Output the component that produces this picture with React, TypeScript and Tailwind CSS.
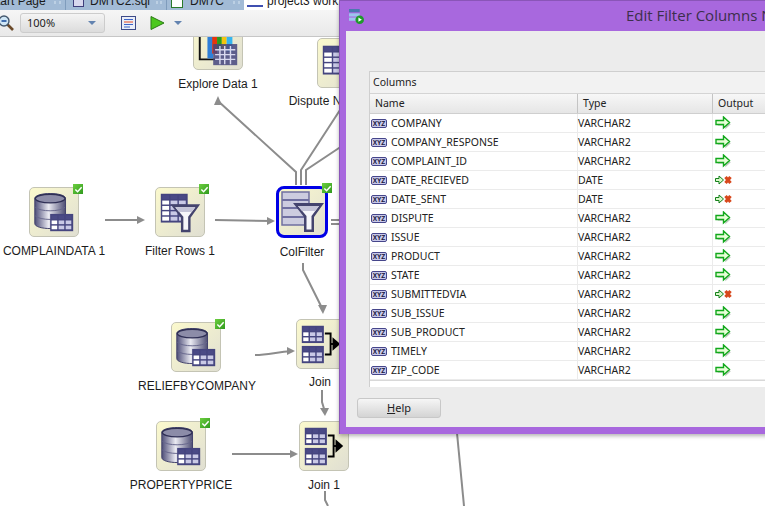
import React from 'react';

const arial = 'font-["Liberation_Sans",Arial,sans-serif]';
const tahoma = 'font-["Noto_Sans",Tahoma,sans-serif]';

const GridTable = ({ x, y, w, h, cols = 3, rows = 4 }: { x: number; y: number; w: number; h: number; cols?: number; rows?: number }) => {
  const cw = (w - 2) / cols;
  const ch = (h - 2) / rows;
  const cells = [];
  for (let r = 0; r < rows; r++) {
    for (let c = 0; c < cols; c++) {
      cells.push(
        <rect
          key={`${r}-${c}`}
          x={x + 1.5 + c * cw}
          y={y + 1.5 + r * ch}
          width={cw - 1.5}
          height={ch - 1.5}
          fill={r === 0 ? '#4a4a86' : c === 0 ? '#ffffff' : '#c9c9e6'}
        />
      );
    }
  }
  return (
    <g>
      <rect x={x} y={y} width={w} height={h} fill="#45457f" />
      {cells}
    </g>
  );
};

const Funnel = ({ dx = 0, dy = 0 }: { dx?: number; dy?: number }) => (
  <g transform={`translate(${dx} ${dy})`}>
    <path d="M15 17H46L36 31V46H26V31Z" fill="#44446e" />
    <path d="M20 20H41L33.5 30V43.5H28.5V30Z" fill="#f6f6fa" />
    <path d="M20 20H41L37 25H24Z" fill="#c4c4d8" />
  </g>
);

const DbIcon = () => (
  <svg viewBox="0 0 50 50" className="w-full h-full">
    <defs>
      <linearGradient id="dbg" x1="0" x2="1" y1="0" y2="0">
        <stop offset="0" stopColor="#4e4e78" />
        <stop offset="0.45" stopColor="#eaeaf2" />
        <stop offset="1" stopColor="#4e4e74" />
      </linearGradient>
    </defs>
    <path d="M5 11C5 4 37 4 37 11V37C37 44 5 44 5 37Z" fill="url(#dbg)" stroke="#3f3f6a" strokeWidth="1" />
    <ellipse cx="21" cy="11" rx="15.5" ry="4.5" fill="#8c8ca8" stroke="#2f2f55" strokeWidth="1.5" />
    <path d="M5.5 20C10 25 32 25 36.5 20M5.5 29C10 34 32 34 36.5 29" fill="none" stroke="#66668c" strokeWidth="1" />
    <GridTable x={21} y={27} w={24} h={18} rows={3} />
  </svg>
);

const FilterRowsIcon = () => (
  <svg viewBox="0 0 50 50" className="w-full h-full">
    <GridTable x={5} y={6} w={28} h={30} rows={5} />
    <Funnel />
  </svg>
);

const ColFilterIcon = () => (
  <svg viewBox="0 0 50 50" className="w-full h-full">
    <rect x="5" y="5" width="27" height="33" fill="#ccccdf" stroke="#6f6fa0" strokeWidth="1.5" />
    <path d="M5 13H32M5 21H32M5 30H32" stroke="#6f6fa0" strokeWidth="2" />
    <Funnel dx={1} dy={-1} />
  </svg>
);

const JoinIcon = () => (
  <svg viewBox="0 0 50 50" className="w-full h-full">
    <GridTable x={5} y={6} w={23} h={18} rows={3} />
    <GridTable x={5} y={27} w={23} h={18} rows={3} />
    <path d="M29 14H35V36H29" fill="none" stroke="#000000" strokeWidth="2" />
    <path d="M35 25H38" stroke="#000000" strokeWidth="2" />
    <path d="M37 18L45 25L37 32Z" fill="#000000" />
  </svg>
);

const ExploreIcon = () => (
  <svg viewBox="0 0 50 50" className="w-full h-full">
    <path d="M6 0V40H22" fill="none" stroke="#111111" strokeWidth="2" />
    <rect x="14" y="9" width="6" height="30" fill="#2f7fd8" />
    <rect x="19" y="0" width="5" height="34" fill="#e8340c" />
    <rect x="24" y="0" width="5" height="30" fill="#2c9a1c" />
    <rect x="29" y="0" width="5" height="30" fill="#f3c40f" />
    <rect x="34" y="6" width="6" height="26" fill="#35b4ee" />
    <rect x="20" y="24" width="25" height="22" fill="#45457f" fillOpacity="0.85" />
    <path d="M22 30H43M22 35H43M22 40H43M27 26V45M32 26V45M38 26V45" stroke="#d8d8ee" strokeWidth="1.5" />
  </svg>
);

const DisputeIcon = () => (
  <svg viewBox="0 0 50 50" className="w-full h-full">
    <GridTable x={5} y={7} w={30} h={30} rows={5} />
  </svg>
);

const Check = () => (
  <div className="absolute -right-[5px] -top-[4px] w-[10px] h-[10px] bg-gradient-to-br from-[#6ccf3f] to-[#2f9a1e] flex items-center justify-center">
    <svg viewBox="0 0 10 10" className="w-[9px] h-[9px]">
      <path d="M1.5 5L4 7.5L8.5 2.5" fill="none" stroke="#ffffff" strokeWidth="1.6" />
    </svg>
  </div>
);

// Node on the workflow canvas; className places it, label is centred under the box
const FlowNode = ({ className, label, icon, done, selected, labelClass = 'mt-[7px]' }: {
  className: string;
  label: string;
  icon: React.ReactNode;
  done?: boolean;
  selected?: boolean;
  labelClass?: string;
}) => (
  <div className={`absolute w-[160px] flex flex-col items-center ${className}`}>
    <div
      className={`relative shrink-0 w-[50px] h-[50px] rounded-[5px] bg-gradient-to-br from-[#fbf9cd] to-[#e0dfd2] ${
        selected ? 'outline-[3px] outline outline-[#0000e6] -outline-offset-2 rounded-[7px]' : 'border border-[#c4c4b4]'
      }`}
    >
      {icon}
      {done && <Check />}
    </div>
    <div className={`${labelClass} text-[12px] leading-[14px] text-[#1c1c1c] whitespace-nowrap ${arial}`}>{label}</div>
  </div>
);

const Connectors = () => (
  <svg viewBox="0 37 765 469" className="absolute inset-0 w-[765px] h-[469px]" fill="none" stroke="#8c8c8c" strokeWidth="2">
    <path d="M105 220H142M215 220L272 221" />
    <path d="M296 185V172L218 101" />
    <path d="M301 185V170L340 110" />
    <path d="M306 185V170L342 146" />
    <path d="M331 220H340M331 224H340" />
    <path d="M303 263V270L322 308" />
    <path d="M255 355C270 355 275 352 293 351" />
    <path d="M322 390V402L325 412" />
    <path d="M232 454H295" />
    <path d="M325 491V500L328 506" />
    <path d="M457 433L464 506" />
    <g fill="#8c8c8c" stroke="none">
      <path d="M145 220L137 216V224Z" />
      <path d="M275 221L267 217V225Z" />
      <path d="M218 96L214 105H222Z" />
      <path d="M323 314L318 305H327Z" />
      <path d="M295 351L287 347V355Z" />
      <path d="M325 416L320 408H329Z" />
      <path d="M298 454L290 450V458Z" />
    </g>
  </svg>
);

const columns: { name: string; type: string; out?: boolean }[] = [
  { name: 'COMPANY', type: 'VARCHAR2', out: true },
  { name: 'COMPANY_RESPONSE', type: 'VARCHAR2', out: true },
  { name: 'COMPLAINT_ID', type: 'VARCHAR2', out: true },
  { name: 'DATE_RECIEVED', type: 'DATE' },
  { name: 'DATE_SENT', type: 'DATE' },
  { name: 'DISPUTE', type: 'VARCHAR2', out: true },
  { name: 'ISSUE', type: 'VARCHAR2', out: true },
  { name: 'PRODUCT', type: 'VARCHAR2', out: true },
  { name: 'STATE', type: 'VARCHAR2', out: true },
  { name: 'SUBMITTEDVIA', type: 'VARCHAR2' },
  { name: 'SUB_ISSUE', type: 'VARCHAR2', out: true },
  { name: 'SUB_PRODUCT', type: 'VARCHAR2', out: true },
  { name: 'TIMELY', type: 'VARCHAR2', out: true },
  { name: 'ZIP_CODE', type: 'VARCHAR2', out: true },
];

const XyzIcon = () => (
  <svg viewBox="0 0 16 9" className="w-[16px] h-[9px] shrink-0">
    <rect x="0.5" y="0.5" width="15" height="8" rx="1.5" fill="#c9c9ea" stroke="#45458a" />
    <text x="8" y="6.8" textAnchor="middle" fontSize="6.5" fontWeight="700" fontFamily="Liberation Sans" fill="#14143a">XYZ</text>
  </svg>
);

const OutArrow = () => (
  <svg viewBox="0 0 16 14" className="w-[16px] h-[14px]">
    <path d="M2 6H9.5V2.5L15 7.5L9.5 12.5V9H2Z" fill="#5a7a5a" opacity="0.4" transform="translate(0.8 0.8)" />
    <path d="M1 4.5H8.5V1L14.5 6.5L8.5 12V8.5H1Z" fill="#e8ffd8" stroke="#12a81c" strokeWidth="1.4" />
  </svg>
);

const NoOutArrow = () => (
  <svg viewBox="0 0 17 10" className="w-[17px] h-[10px]">
    <path d="M0.5 3.5H4V1L8.5 5L4 9V6.5H0.5Z" fill="#d8f8c8" stroke="#14801a" />
    <path d="M10.5 2L15.5 8M15.5 2L10.5 8" stroke="#d8481c" strokeWidth="3.2" />
  </svg>
);

const Triangle = ({ className }: { className: string }) => (
  <svg viewBox="0 0 8 4" className={`w-[8px] h-[4px] ${className}`}>
    <path d="M0 0H8L4 4Z" fill="#6383b0" />
  </svg>
);

const Tab = ({ className, icon, text, dots = true }: { className: string; icon?: React.ReactNode; text: string; dots?: boolean }) => (
  <div className={`relative h-[10px] flex items-start overflow-hidden ${className}`}>
    {icon}
    <span className={`-mt-[6px] text-[12px] leading-[15px] text-[#1a1a1a] whitespace-nowrap ${arial}`}>{text}</span>
    {dots && <span className="ml-auto mr-[4px] mt-[1px] w-[7px] h-[3px] border-x-2 border-[#bcd0e4]" />}
  </div>
);

const Dialog = () => (
  <div className="absolute left-[339px] top-0 w-[445px] h-[434px] bg-[#a868de] border-t border-l border-[#8a55b8] shadow-[0_2px_4px_rgba(0,0,0,0.3)] flex flex-col">
    <div className="relative h-[30px] shrink-0 flex items-center">
      <svg viewBox="0 0 14 14" className="ml-[9px] w-[15px] h-[15px]">
        <rect x="0" y="0" width="10" height="3" fill="#4a78b0" />
        <rect x="0" y="4" width="10" height="3" fill="#9cc4ee" />
        <rect x="0" y="8" width="10" height="3" fill="#9cc4ee" />
        <circle cx="10" cy="10" r="4" fill="#1f9a2c" />
        <path d="M8.8 8V12L12 10Z" fill="#ffffff" />
      </svg>
      <span className={`absolute left-[286px] top-[4px] text-[15px] leading-[20px] text-[#3c2f4c] whitespace-nowrap font-["Open_Sans",sans-serif]`}>
        Edit Filter Columns N
      </span>
    </div>
    <div className="ml-[6px] h-[396px] bg-[#ececec] flex flex-col">
      <div className={`ml-[23px] mt-[40px] h-[316px] w-[420px] border-t border-l border-[#cfcfcf] bg-white flex flex-col text-[10.5px] leading-[14px] text-[#222222] ${tahoma}`}>
        <div className="h-[22px] bg-[#f2f2f2] border-b border-[#d4d4d4] flex items-center pl-[3px] pb-[1px]">Columns</div>
        <div className="h-[20px] flex bg-gradient-to-b from-[#f7f7f7] to-[#e6e6e6] border-b border-[#cfcfcf]">
          <div className="w-[208px] border-r border-[#c4c4c4] pl-[5px] pb-[1px] flex items-center">Name</div>
          <div className="w-[135px] border-r border-[#c4c4c4] pl-[5px] pb-[1px] flex items-center">Type</div>
          <div className="flex-1 pl-[5px] pb-[1px] flex items-center">Output</div>
        </div>
        {columns.map((col) => (
          <div key={col.name} className="h-[19px] flex border-b border-[#ebebeb]">
            <div className="w-[208px] border-r border-[#ebebeb] pl-[1px] flex items-center gap-[4px]">
              <XyzIcon />
              <span>{col.name}</span>
            </div>
            <div className="w-[135px] border-r border-[#ebebeb] flex items-center">{col.type}</div>
            <div className="flex-1 pl-[2px] flex items-center">{col.out ? <OutArrow /> : <NoOutArrow />}</div>
          </div>
        ))}
        <div className="flex-1 border-t border-[#d8d8d8]" />
      </div>
      <button className={`ml-[11px] mt-[11px] w-[84px] h-[20px] rounded-[3px] border border-[#c8c8c8] bg-gradient-to-b from-[#f6f6f6] to-[#d4d4d4] text-[11px] text-[#222222] ${tahoma}`}>
        <span className="underline">H</span>elp
      </button>
    </div>
  </div>
);

export default function App() {
  return (
    <div className="relative w-[765px] h-[506px] overflow-hidden bg-white flex flex-col">
      {/* document tabs, only the lower edge is in the shot */}
      <div className="h-[10px] shrink-0 flex bg-[#a2bbd6]">
        <Tab className="w-[66px] border-r border-[#7f9cbc]" icon={<div className="-ml-[3px]" />} text="tart Page" />
        <Tab
          className="ml-[2px] w-[99px] pl-[5px] gap-[6px] border-r border-[#7f9cbc]"
          icon={<div className="shrink-0 w-[11px] h-[7px] border border-t-0 border-[#3f3f7c] bg-[#d8d8ee]" />}
          text="DMTC2.sql"
        />
        <Tab
          className="ml-[2px] w-[75px] pl-[2px] gap-[7px]"
          icon={<div className="shrink-0 w-[12px] h-[8px] border border-t-0 border-[#2a7a2a] bg-white" />}
          text="DM7C"
        />
        <Tab
          className="w-[100px] pl-[3px] gap-[4px] bg-white"
          icon={<div className="shrink-0 w-[16px] h-[7px] border-b-2 border-[#3f4fb0]" />}
          text="project3 workflow"
          dots={false}
        />
      </div>
      {/* toolbar */}
      <div className="h-[27px] shrink-0 flex items-center bg-gradient-to-b from-[#f6f6f6] to-[#e9e9e9] border-b border-[#c6c6c6]">
        <svg viewBox="0 0 16 16" className="-ml-[2px] w-[16px] h-[16px]">
          <path d="M9 9L15 15" stroke="#6b4a2a" strokeWidth="2.6" />
          <circle cx="6" cy="6" r="5" fill="#cfe6f6" stroke="#44586e" strokeWidth="1.4" />
          <path d="M3.5 6H8.5" stroke="#1c4f9c" strokeWidth="1.6" />
        </svg>
        <div className={`ml-[6px] w-[85px] h-[20px] rounded-[3px] border border-[#cccccc] bg-gradient-to-b from-[#f4f4f4] to-[#dcdcdc] flex items-center pl-[6px] text-[11px] text-[#222222] ${tahoma}`}>
          <span className="pt-[1px]">100%</span>
          <Triangle className="ml-auto mr-[8px]" />
        </div>
        <svg viewBox="0 0 15 14" className="ml-[16px] w-[15px] h-[14px]">
          <rect x="0.5" y="0.5" width="14" height="13" fill="#eaeef8" stroke="#3d4a88" />
          <path d="M3 3.5H12M3 8.5H12" stroke="#3c64c8" />
          <path d="M3 6H12" stroke="#e84a20" />
          <path d="M3 11H9" stroke="#3c64c8" />
        </svg>
        <svg viewBox="0 0 15 14" className="ml-[14px] w-[15px] h-[14px]">
          <path d="M1 0.5L14 7L1 13.5Z" fill="#4cc81e" stroke="#2b7a16" />
        </svg>
        <Triangle className="ml-[9px]" />
      </div>
      {/* workflow canvas */}
      <div className="relative flex-1 overflow-hidden">
        <Connectors />
        <FlowNode className="left-[138px] -top-[17px]" label="Explore Data 1" icon={<ExploreIcon />} />
        <FlowNode className="left-[262px] top-[1px]" label="Dispute N" icon={<DisputeIcon />} labelClass="mt-[6px] -ml-[54px]" />
        <FlowNode className="-left-[26px] top-[150px]" label="COMPLAINDATA 1" icon={<DbIcon />} done />
        <FlowNode className="left-[100px] top-[150px]" label="Filter Rows 1" icon={<FilterRowsIcon />} done />
        <FlowNode className="left-[222px] top-[150px]" label="ColFilter" icon={<ColFilterIcon />} done selected labelClass="mt-[8px]" />
        <FlowNode className="left-[241px] top-[282px]" label="Join" icon={<JoinIcon />} labelClass="mt-[6px] -ml-[2px]" />
        <FlowNode className="left-[116px] top-[285px]" label="RELIEFBYCOMPANY" icon={<DbIcon />} done labelClass="mt-[7px] ml-[2px]" />
        <FlowNode className="left-[101px] top-[384px]" label="PROPERTYPRICE" icon={<DbIcon />} done />
        <FlowNode className="left-[244px] top-[384px]" label="Join 1" icon={<JoinIcon />} />
      </div>
      <Dialog />
    </div>
  );
}
